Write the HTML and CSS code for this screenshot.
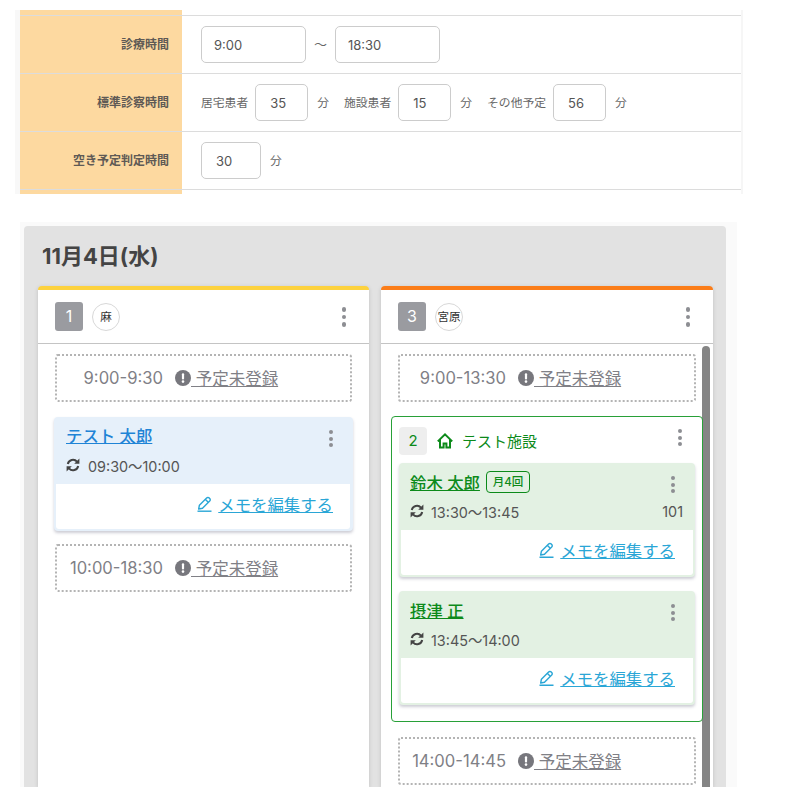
FILE: index.html
```html
<!doctype html>
<html lang="ja">
<head>
    <meta charset="UTF-8">
    <title>診療スケジュール</title>
    <link rel="stylesheet" href="styles.css">
</head>
<body>
    <svg class="defs" width="0" height="0">
        <symbol id="i-alert" viewBox="0 0 16 16">
            <circle cx="8" cy="8" r="8" fill="#77777d"/>
            <rect x="6.9" y="3.2" width="2.2" height="6.2" rx="1" fill="#fff"/>
            <circle cx="8" cy="11.6" r="1.3" fill="#fff"/>
        </symbol>
        <symbol id="i-sync" viewBox="0 0 14 14">
            <path d="M1.8 6A5.3 5.3 0 0 1 11 3.6M12.2 8A5.3 5.3 0 0 1 3 10.4" fill="none" stroke="#444" stroke-width="2"/>
            <path d="M13.4 .6v5.2H8.2zM.6 13.4V8.2h5.2z" fill="#444"/>
        </symbol>
        <symbol id="i-pencil" viewBox="0 0 15 16">
            <path d="M2.4 9.2 9.6 2a1.9 1.9 0 0 1 2.7 0l.4.4a1.9 1.9 0 0 1 0 2.7l-7.2 7.2-3.8.7zM8.3 3.3l3.4 3.4" fill="none" stroke="#2aa6d6" stroke-width="1.4" stroke-linejoin="round"/>
            <path d="M0.5 15.2h14" stroke="#2aa6d6" stroke-width="1.4"/>
        </symbol>
    </svg>

    <div class="settings">
        <div class="row">
            <div class="label">診療時間</div>
            <div class="field">
                <input class="input wide" value="9:00">
                <span class="tilde">〜</span>
                <input class="input wide" value="18:30">
            </div>
        </div>
        <div class="row">
            <div class="label">標準診察時間</div>
            <div class="field">
                <span class="name">居宅患者</span>
                <input class="input small" value="35">
                <span class="unit">分</span>
                <span class="name">施設患者</span>
                <input class="input small" value="15">
                <span class="unit">分</span>
                <span class="name">その他予定</span>
                <input class="input small" value="56">
                <span class="unit">分</span>
            </div>
        </div>
        <div class="row">
            <div class="label">空き予定判定時間</div>
            <div class="field">
                <input class="input medium" value="30">
                <span class="unit">分</span>
            </div>
        </div>
    </div>

    <div class="board-wrap">
        <div class="board">
            <h2 class="day">11月4日(水)</h2>
            <div class="columns">
                <section class="column yellow">
                    <div class="col-head">
                        <span class="num">1</span>
                        <span class="avatar">麻</span>
                        <span class="kebab"><i></i><i></i><i></i></span>
                    </div>
                    <div class="col-body">
                        <div class="slot">
                            <span class="slot-time">9:00-9:30</span>
                            <a class="slot-link"><svg class="alert"><use href="#i-alert"/></svg> 予定未登録</a>
                        </div>
                        <div class="card blue">
                            <div class="card-head">
                                <div class="card-name"><a class="patient">テスト 太郎</a></div>
                                <div class="card-time"><svg class="sync"><use href="#i-sync"/></svg>09:30〜10:00</div>
                                <span class="kebab"><i></i><i></i><i></i></span>
                            </div>
                            <div class="card-foot">
                                <svg class="pencil"><use href="#i-pencil"/></svg><a class="memo">メモを編集する</a>
                            </div>
                        </div>
                        <div class="slot">
                            <span class="slot-time">10:00-18:30</span>
                            <a class="slot-link"><svg class="alert"><use href="#i-alert"/></svg> 予定未登録</a>
                        </div>
                    </div>
                </section>

                <section class="column orange">
                    <div class="col-head">
                        <span class="num">3</span>
                        <span class="avatar">宮原</span>
                        <span class="kebab"><i></i><i></i><i></i></span>
                    </div>
                    <div class="col-body">
                        <div class="scrollbar"></div>
                        <div class="slot">
                            <span class="slot-time">9:00-13:30</span>
                            <a class="slot-link"><svg class="alert"><use href="#i-alert"/></svg> 予定未登録</a>
                        </div>
                        <div class="group">
                            <div class="group-head">
                                <span class="group-num">2</span>
                                <svg class="home" viewBox="0 0 16 16"><path d="M.8 8.4 8 1.4l7.2 7M3 6.8v7.8h3.6v-4h2.8v4H13V6.8" fill="none" stroke="#0c8a1a" stroke-width="2"/></svg>
                                <span class="group-name">テスト施設</span>
                                <span class="kebab"><i></i><i></i><i></i></span>
                            </div>
                            <div class="card green">
                                <div class="card-head">
                                    <div class="card-name"><a class="patient">鈴木 太郎</a><span class="freq">月4回</span></div>
                                    <div class="card-time"><svg class="sync"><use href="#i-sync"/></svg>13:30〜13:45<span class="room">101</span></div>
                                    <span class="kebab"><i></i><i></i><i></i></span>
                                </div>
                                <div class="card-foot">
                                    <svg class="pencil"><use href="#i-pencil"/></svg><a class="memo">メモを編集する</a>
                                </div>
                            </div>
                            <div class="card green">
                                <div class="card-head">
                                    <div class="card-name"><a class="patient">摂津 正</a></div>
                                    <div class="card-time"><svg class="sync"><use href="#i-sync"/></svg>13:45〜14:00</div>
                                    <span class="kebab"><i></i><i></i><i></i></span>
                                </div>
                                <div class="card-foot">
                                    <svg class="pencil"><use href="#i-pencil"/></svg><a class="memo">メモを編集する</a>
                                </div>
                            </div>
                        </div>
                        <div class="slot">
                            <span class="slot-time">14:00-14:45</span>
                            <a class="slot-link"><svg class="alert"><use href="#i-alert"/></svg> 予定未登録</a>
                        </div>
                    </div>
                </section>
            </div>
        </div>
    </div>
</body>
</html>
```

FILE: styles.css
```css
html,
body {
    margin: 0;
    padding: 0;
    height: 787px;
    overflow: hidden;
    background-color: #fff;
}

body {
    font-family: "Inter", "Noto Sans CJK JP", sans-serif;
    color: #666;
}

.defs {
    position: absolute;
}

/* settings table */

.settings {
    width: 721px;
    margin: 10px 0 0 20px;
    padding: 5px 0 4px;
    background: linear-gradient(to right, #fdd9a0 162px, transparent 162px);
    box-shadow: -5px 0 0 #f8f8f8, 2px 0 0 #f6f6f6;
}

.row {
    display: flex;
    height: 58px;
    border-top: 1px solid #dcdcdc;
    box-sizing: border-box;
}

.row:last-child {
    height: 59px;
    border-bottom: 1px solid #dcdcdc;
}

.label {
    width: 162px;
    padding: 0 13px 2px 0;
    box-sizing: border-box;
    display: flex;
    align-items: center;
    justify-content: flex-end;
    font-size: 12px;
    font-weight: 700;
    color: #5f5a55;
}

.field {
    display: flex;
    align-items: center;
    padding-left: 19px;
    font-size: 11.8px;
}

.input {
    height: 37px;
    box-sizing: border-box;
    border: 1px solid #ccc;
    border-radius: 5px;
    padding: 0 0 0 12px;
    font-family: inherit;
    font-size: 13px;
    color: #555;
    background: #fff;
}

.wide {
    width: 105px;
}

.small {
    width: 53px;
    padding-left: 14px;
}

.medium {
    width: 60px;
    padding-left: 14px;
}

.tilde {
    width: 29px;
    text-align: center;
    font-size: 13px;
    padding-bottom: 2px;
}

.name {
    margin: 0 7px 2px 0;
}

.unit {
    margin: 0 15px 2px 9px;
}

/* board */

.board-wrap {
    margin: 28px 0 0 20px;
    width: 717px;
    padding: 4px 11px 0 4px;
    box-sizing: border-box;
    background-color: #fafafa;
}

.board {
    height: 561px;
    padding: 0 13px 0 14px;
    background-color: #e2e2e2;
    border-radius: 4px 4px 0 0;
    overflow: hidden;
}

.day {
    margin: 0;
    padding: 14px 0 0 4px;
    height: 60px;
    box-sizing: border-box;
    font-size: 22px;
    line-height: 32px;
    font-weight: 700;
    color: #444;
}

.columns {
    display: flex;
    gap: 12px;
}

.column {
    width: 331px;
    height: 501px;
    box-sizing: border-box;
    overflow: hidden;
    background-color: #fff;
    border-top: 4px solid;
    border-radius: 4px 4px 0 0;
    box-shadow: 0 1px 4px rgba(0, 0, 0, 0.15);
}

.orange {
    width: 332px;
}

.yellow {
    border-top-color: #fdd23e;
}

.orange {
    border-top-color: #fb7d19;
}

.col-head {
    position: relative;
    display: flex;
    align-items: center;
    gap: 9px;
    height: 53px;
    padding-left: 17px;
    border-bottom: 1px solid #c4c4c4;
}

.num {
    width: 28px;
    height: 29px;
    border-radius: 3px;
    background-color: #9a9ba0;
    color: #fff;
    font-size: 16px;
    line-height: 29px;
    text-align: center;
}

.avatar {
    width: 28px;
    height: 28px;
    box-sizing: border-box;
    border: 1px solid #d8d8d8;
    border-radius: 50%;
    color: #333;
    font-size: 11.5px;
    line-height: 26px;
    text-align: center;
    white-space: nowrap;
}

.kebab {
    position: absolute;
    display: flex;
    flex-direction: column;
    gap: 2.5px;
}

.kebab i {
    width: 4px;
    height: 4px;
    border-radius: 50%;
    background-color: #8d8e93;
}

.col-head .kebab {
    right: 23px;
    top: 17px;
    gap: 3px;
}

.col-head .kebab i {
    width: 4.5px;
    height: 4.5px;
}

.col-body {
    position: relative;
    padding: 10px 10px 0;
}

.scrollbar {
    position: absolute;
    top: 2px;
    right: 3px;
    width: 8px;
    height: 460px;
    border-radius: 4px 4px 0 0;
    background-color: #858585;
}

.slot {
    display: flex;
    align-items: center;
    height: 48px;
    margin: 0 7px 15px;
    box-sizing: border-box;
    border: 2px dotted #b4b4b4;
    border-radius: 3px;
    font-size: 16.6px;
    color: #808086;
}

.slot:last-child {
    margin-bottom: 0;
}

.slot-time {
    width: 106px;
    text-align: right;
}

.slot-link {
    display: flex;
    align-items: center;
    margin-left: 12px;
    font-size: 16.5px;
    text-decoration: underline;
    white-space: pre;
}

.alert {
    width: 16px;
    height: 16px;
}

/* patient cards */

.card {
    border-radius: 4px;
    box-shadow: 0 2px 3px rgba(60, 60, 90, 0.25);
    margin-bottom: 14px;
    overflow: hidden;
}

.blue {
    margin: 0 6px 13px;
    background-color: #e6f0fa;
}

.green {
    background-color: #e3f1e3;
}

.card-head {
    position: relative;
    height: 67px;
    box-sizing: border-box;
    padding: 7px 12px 0 11px;
}

.blue .card-head {
    padding: 6px 12px 0;
}

.card-name {
    display: flex;
    align-items: center;
    height: 24px;
}

.patient {
    font-size: 16.4px;
    font-weight: 500;
    text-decoration: underline;
}

.blue .patient {
    color: #1f84d6;
}

.green .patient {
    color: #0c8a1a;
}

.freq {
    margin-left: 6px;
    width: 44px;
    height: 22px;
    box-sizing: border-box;
    border: 1px solid #0c8a1a;
    border-radius: 4px;
    color: #0c8a1a;
    font-size: 11.5px;
    font-weight: 500;
    line-height: 20px;
    text-align: center;
}

.card-time {
    display: flex;
    align-items: center;
    height: 20px;
    margin-top: 8px;
    font-size: 14.4px;
    color: #555;
}

.green .card-time {
    margin-top: 7px;
}

.sync {
    width: 14px;
    height: 14px;
    margin-right: 8px;
}

.green .sync {
    margin-right: 7px;
}

.room {
    margin-left: auto;
}

.card .kebab {
    right: 20px;
    top: 13px;
}

.card-foot {
    display: flex;
    align-items: center;
    justify-content: flex-end;
    height: 45px;
    margin: 0 3px 2px 2px;
    padding: 0 17px 6px 0;
    box-sizing: border-box;
    background-color: #fff;
    border-radius: 0 0 3px 3px;
}

.green .card-foot {
    margin: 0 2px 2px;
    padding-right: 18px;
}

.pencil {
    width: 15px;
    height: 16px;
    margin-right: 6px;
}

.memo {
    font-size: 16.4px;
    color: #2aa6d6;
    text-decoration: underline;
}

/* facility group */

.group {
    position: relative;
    margin: -1px 0 15px;
    padding: 10px 7px 2px;
    border: 1px solid #28a038;
    border-radius: 4px;
}

.group-head {
    position: relative;
    display: flex;
    align-items: center;
    height: 28px;
    margin-bottom: 8px;
}

.group-num {
    width: 28px;
    height: 28px;
    border-radius: 4px;
    background-color: #eee;
    color: #0c8a1a;
    font-size: 15px;
    line-height: 28px;
    text-align: center;
}

.home {
    width: 16px;
    height: 16px;
    margin: 0 9px 0 10px;
}

.group-name {
    font-size: 15px;
    color: #0c8a1a;
    padding-bottom: 2px;
}

.group-head .kebab {
    right: 13px;
    top: 2px;
}
```
